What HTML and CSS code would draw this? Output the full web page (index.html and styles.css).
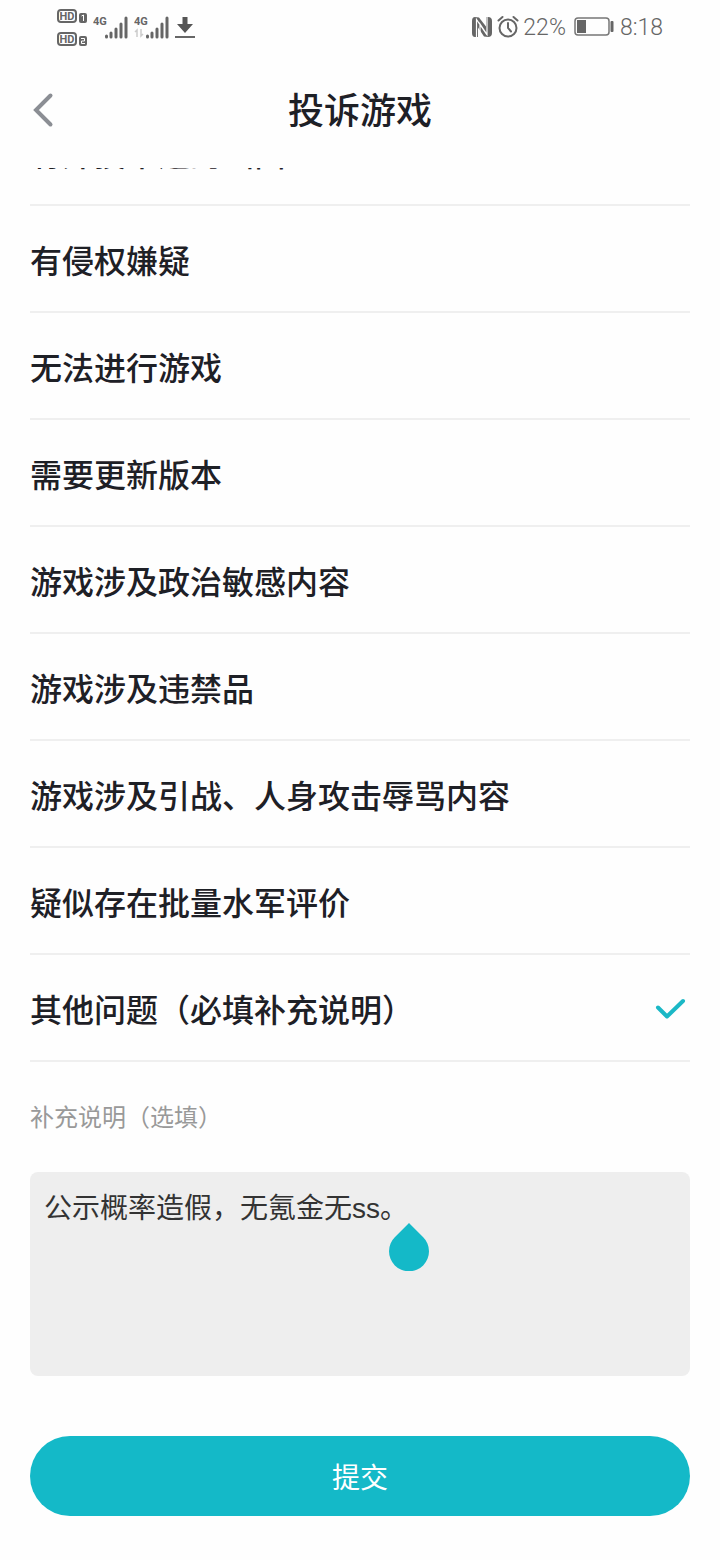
FILE: index.html
```html
<!DOCTYPE html>
<html lang="zh-CN">
<head>
    <meta charset="UTF-8">
    <meta name="viewport" content="width=device-width, initial-scale=1.0">
    <title>投诉游戏</title>
    <link rel="stylesheet" href="styles.css">
</head>
<body>
    <header class="top">
        <div class="status">
            <div class="status__group">
                <svg class="icon" width="32" height="40" viewBox="0 0 32 40" aria-hidden="true">
                    <g fill="none" stroke="#666" stroke-width="2">
                        <rect x="2" y="3" width="18" height="12" rx="3"/>
                        <rect x="2" y="26" width="18" height="12" rx="3"/>
                    </g>
                    <rect x="23" y="6" width="8" height="10" rx="2" fill="#666"/>
                    <rect x="23" y="29" width="8" height="10" rx="2" fill="#666"/>
                    <g class="icon__hd" fill="#666" text-anchor="middle">
                        <text x="11" y="13">HD</text>
                        <text x="11" y="36">HD</text>
                    </g>
                    <path d="M25.500 9L27.500 8v6M25 31.500h3.500v2.500h-3v2.500h3.500" fill="none" stroke="#fff"/>
                </svg>
                <svg class="icon" width="36" height="32" viewBox="0 0 36 32" aria-hidden="true">
                    <text class="icon__net" x="0" y="14" fill="#666">4G</text>
                    <path d="M13.500 25v1M18 22v4M23 18v8M28 13v13M33 7v19" stroke="#666" stroke-width="3" stroke-linecap="round" fill="none"/>
                </svg>
                <svg class="icon" width="36" height="32" viewBox="0 0 36 32" aria-hidden="true">
                    <text class="icon__net" x="0" y="14" fill="#666">4G</text>
                    <path d="M3 26v-7l-2 2M7 18v7l2-2" stroke="#ccc" stroke-width="1.500" fill="none"/>
                    <path d="M13.500 25v1M18 22v4M23 18v8M28 13v13M33 7v19" stroke="#666" stroke-width="3" stroke-linecap="round" fill="none"/>
                </svg>
                <svg class="icon" width="20" height="24" viewBox="0 0 20 24" aria-hidden="true">
                    <path d="M7.500 2h5v7H18l-8 9-8-9h5.500z" fill="#555"/>
                    <path d="M0 22h20" stroke="#666" stroke-width="2"/>
                </svg>
            </div>
            <div class="status__group status__group--right">
                <svg class="icon" width="22" height="24" viewBox="0 0 22 24" aria-hidden="true">
                    <path d="M4 2l4 .5 7 9V2h2q4 0 4 4v12q0 4-4 4l-4-.5-6-9V22H4q-3 0-3-4V6q0-4 3-4z" fill="#666"/>
                    <path d="M5.500 22V4.500L16 20M16 2v17.500L9 9v9" fill="none" stroke="#fff" stroke-width="1.200"/>
                </svg>
                <svg class="icon" width="22" height="24" viewBox="0 0 22 24" aria-hidden="true">
                    <g fill="none" stroke="#666" stroke-width="2" stroke-linecap="round">
                        <circle cx="11" cy="13" r="8.500"/>
                        <path d="M11 8v5l3 3.500M1.500 5.500L5.500 2M20.500 5.500L16.500 2"/>
                    </g>
                </svg>
                <span>22%</span>
                <svg class="icon icon--battery" width="40" height="20" viewBox="0 0 40 20" aria-hidden="true">
                    <rect x="1" y="1" width="34" height="17" rx="3" fill="none" stroke="#777" stroke-width="1.500"/>
                    <rect x="3" y="3" width="9" height="13" fill="#666"/>
                    <rect x="36.500" y="4" width="3" height="11" rx="1" fill="#666"/>
                </svg>
                <span>8:18</span>
            </div>
        </div>
        <div class="nav">
            <button class="nav__back" type="button" aria-label="返回">
                <svg width="24" height="36" viewBox="0 0 24 36" aria-hidden="true">
                    <path d="M20.500 3.500L6 18l14.500 14.500" fill="none" stroke="#8b8e94" stroke-width="4" stroke-linecap="round"/>
                </svg>
            </button>
            <h1 class="nav__title">投诉游戏</h1>
        </div>
    </header>

    <form class="report">
        <div class="reasons" role="radiogroup" aria-label="投诉游戏">
            <label class="reason"><input type="radio" name="reason"><span>有外投本造的画面</span></label>
            <label class="reason"><input type="radio" name="reason"><span>有侵权嫌疑</span></label>
            <label class="reason"><input type="radio" name="reason"><span>无法进行游戏</span></label>
            <label class="reason"><input type="radio" name="reason"><span>需要更新版本</span></label>
            <label class="reason"><input type="radio" name="reason"><span>游戏涉及政治敏感内容</span></label>
            <label class="reason"><input type="radio" name="reason"><span>游戏涉及违禁品</span></label>
            <label class="reason"><input type="radio" name="reason"><span>游戏涉及引战、人身攻击辱骂内容</span></label>
            <label class="reason"><input type="radio" name="reason"><span>疑似存在批量水军评价</span></label>
            <label class="reason">
                <input type="radio" name="reason" checked>
                <span>其他问题（必填补充说明）</span>
                <svg class="reason__tick" width="40" height="28" viewBox="0 0 40 28" aria-hidden="true">
                    <path d="M8 13.500L17 22.500L33 7" fill="none" stroke="#1bb8c6" stroke-width="4" stroke-linecap="round" stroke-linejoin="round"/>
                </svg>
            </label>
        </div>

        <label class="note-label" for="note">补充说明（选填）</label>
        <div class="note">
            <textarea class="note__text" id="note" spellcheck="false">公示概率造假，无氪金无ss。</textarea>
            <svg class="note__handle" width="40" height="48" viewBox="0 0 40 48" aria-hidden="true">
                <path d="M20 0L34 14A20 20 0 1 1 6 14z" fill="#14b9c8"/>
            </svg>
        </div>

        <button class="submit" type="submit">提交</button>
    </form>
</body>
</html>
```
FILE: styles.css
```css
* {
    box-sizing: border-box;
}
body {
    margin: 0;
    background: #fefefe;
    color: #1e2026;
    font-family: "Liberation Sans", "Noto Sans CJK SC", sans-serif;
}
button, textarea {
    font-family: inherit;
    border: 0;
}
.top {
    position: sticky;
    top: 0;
    z-index: 1;
    padding-bottom: 2px;
    background: #fefefe;
}
.status {
    display: flex;
    justify-content: space-between;
    align-items: center;
    height: 54px;
    padding: 0 57px 0 56px;
    color: #666;
    font-family: Roboto, sans-serif;
    font-size: 23px;
    font-weight: 300;
}
.status__group {
    display: flex;
    align-items: center;
    gap: 5px;
}
.status__group--right {
    gap: 4px;
}
.icon {
    display: block;
    flex: none;
}
.icon__hd {
    font: bold 11px Roboto, sans-serif;
}
.icon__net {
    font: bold 11px Roboto, sans-serif;
}
.icon--battery {
    margin: 0 2px 0 4px;
}
.nav {
    display: grid;
    grid-template-columns: 60px 1fr 60px;
    align-items: center;
    height: 112px;
    padding: 0 30px;
}
.nav__back {
    justify-self: start;
    padding: 0;
    background: none;
}
.nav__back svg {
    display: block;
}
.nav__title {
    margin: 0;
    padding-top: 4px;
    font-size: 36px;
    font-weight: 500;
    line-height: 52px;
    text-align: center;
}
.report {
    padding: 0 30px 44px;
}
/* the first row is scrolled under the sticky header */
.reasons {
    margin-top: -69px;
}
.reason {
    display: flex;
    align-items: center;
    height: 107px;
    border-bottom: 2px solid #efefef;
    font-size: 32px;
    font-weight: 500;
    line-height: 48px;
}
.reason input {
    appearance: none;
    width: 0;
    margin: 0;
}
.reason span {
    padding-top: 6px;
}
.reason__tick {
    margin-left: auto;
}
.note-label {
    display: block;
    margin: 39px 0 37px;
    color: #999;
    font-size: 24px;
    line-height: 34px;
}
.note {
    position: relative;
}
.note__text {
    display: block;
    width: 100%;
    height: 204px;
    padding: 16px 14px;
    border-radius: 8px;
    background: #eee;
    color: #333;
    font-size: 28px;
    line-height: 42px;
    resize: none;
    outline: none;
}
/* text cursor handle under the caret */
.note__handle {
    position: absolute;
    top: 51px;
    left: 359px;
}
.submit {
    display: block;
    width: 100%;
    height: 80px;
    margin-top: 60px;
    border-radius: 40px;
    background: #14b9c8;
    color: #fff;
    font-size: 28px;
}
```
